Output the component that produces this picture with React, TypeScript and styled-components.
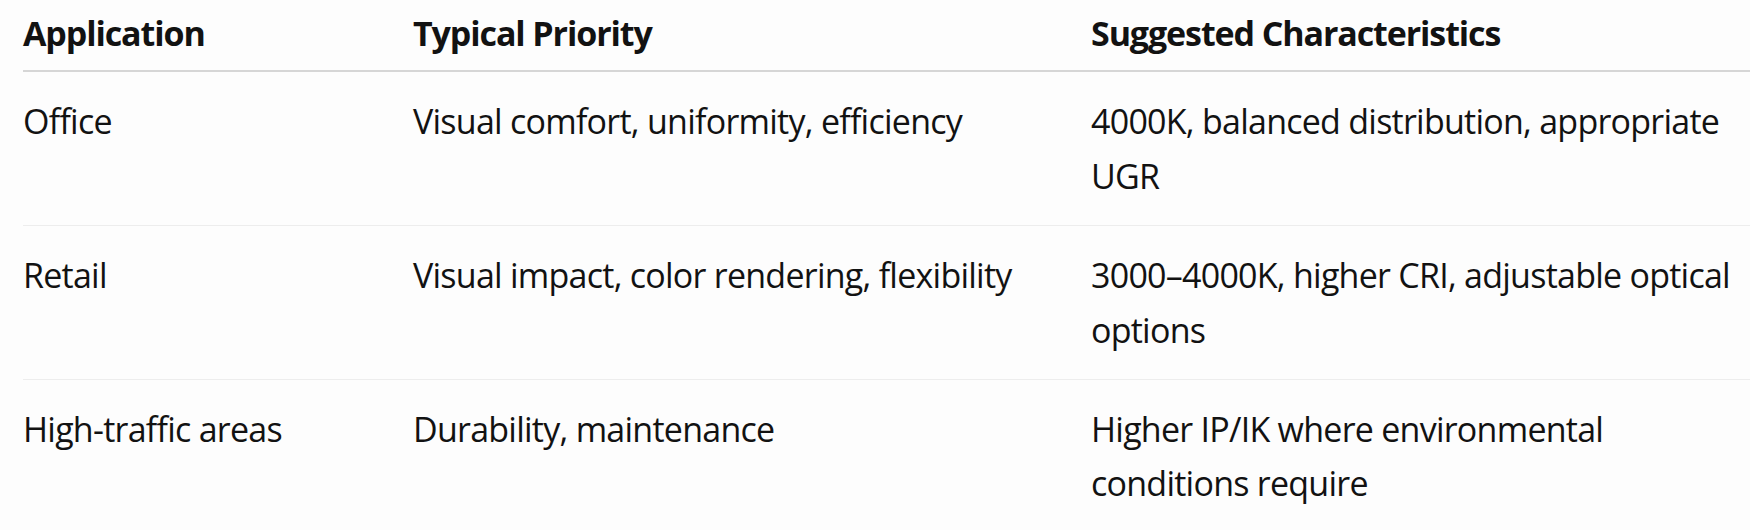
import React from "react"
import styled, { createGlobalStyle } from "styled-components"

const GlobalStyle = createGlobalStyle`
    html, body {
        margin: 0;
        padding: 0;
        overflow: hidden;
        background: #fdfdfd;
    }
    body {
        font-family: "Open Sans", "Noto Sans", sans-serif;
        color: #121212;
    }
`

interface IRow {
    application: string,
    priority: string,
    characteristics: string,
}

const rows: IRow[] = [
    {
        application: 'Office',
        priority: 'Visual comfort, uniformity, efficiency',
        characteristics: '4000K, balanced distribution, appropriate UGR',
    },
    {
        application: 'Retail',
        priority: 'Visual impact, color rendering, flexibility',
        characteristics: '3000–4000K, higher CRI, adjustable optical options',
    },
    {
        application: 'High-traffic areas',
        priority: 'Durability, maintenance',
        characteristics: 'Higher IP/IK where environmental conditions require',
    },
]

export default function App() {
    return (
        <>
            <GlobalStyle />
            <Page>
                <Table>
                    <colgroup>
                        <col style={{ width: 390 }} />
                        <col style={{ width: 678 }} />
                        <col style={{ width: 660 }} />
                    </colgroup>
                    <thead>
                        <tr>
                            <HeadCell>Application</HeadCell>
                            <HeadCell>Typical Priority</HeadCell>
                            <HeadCell>Suggested Characteristics</HeadCell>
                        </tr>
                    </thead>
                    <tbody>
                        {rows.map((row) => (
                            <Row key={row.application}>
                                <Cell>{row.application}</Cell>
                                <Cell>{row.priority}</Cell>
                                <Cell>{row.characteristics}</Cell>
                            </Row>
                        ))}
                    </tbody>
                </Table>
            </Page>
        </>
    )
}

const Page = styled.div`
    padding-left: 23px;
    width: 1800px;
`

const Table = styled.table`
    width: 1728px;
    table-layout: fixed;
    border-collapse: collapse;
    font-size: 34px;
    line-height: 54.4px;
    letter-spacing: -0.75px;
`

const HeadCell = styled.th`
    text-align: left;
    font-weight: 700;
    letter-spacing: -1.1px;
    padding: 6px 0 10px;
    border-bottom: 2px solid #d6d6d6;
    vertical-align: top;
`

const Row = styled.tr`
    border-bottom: 1px solid #ededed;
`

const Cell = styled.td`
    padding: 22px 0;
    vertical-align: top;
`
